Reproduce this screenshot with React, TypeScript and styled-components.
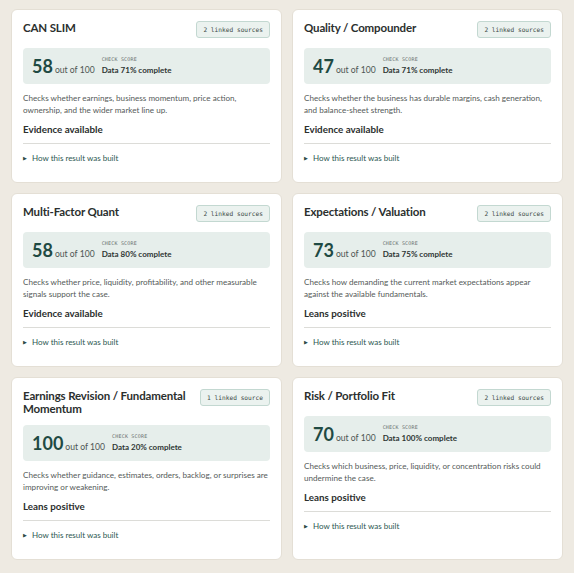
import React from "react";
import styled, { createGlobalStyle } from "styled-components";

const GlobalStyle = createGlobalStyle`
  html, body {
    margin: 0;
    padding: 0;
    background: #eeeae2;
  }
  body {
    font-family: Lato, "Noto Sans", sans-serif;
    color: #2b2f2e;
  }
`;

const Page = styled.div`
  display: grid;
  grid-template-columns: 1fr 1fr;
  gap: 10px;
  padding: 9px 11px 12px 11px;
`;

const Card = styled.div`
  background: #ffffff;
  border: 1px solid #e4dfd5;
  border-radius: 6px;
  padding: 11px 11px 19px 11px;
  display: flex;
  flex-direction: column;
  box-sizing: border-box;
`;

const Head = styled.div`
  display: flex;
  justify-content: space-between;
  align-items: flex-start;
  gap: 8px;
`;

const Title = styled.h3`
  margin: 0;
  font-size: 11.5px;
  line-height: 13px;
  font-weight: 700;
  letter-spacing: -0.15px;
  color: #2b2f2e;
`;

const Badge = styled.span`
  flex-shrink: 0;
  font-family: "DejaVu Sans Mono", "Liberation Mono", monospace;
  font-size: 6.2px;
  line-height: 15px;
  padding: 0 6px;
  border: 1px solid #c3d8d1;
  background: #ebf2ef;
  border-radius: 3px;
  color: #3d4a47;
  white-space: nowrap;
`;

const ScoreBox = styled.div`
  margin-top: 10px;
  background: #e6eeeb;
  border-radius: 4px;
  height: 36px;
  display: flex;
  align-items: center;
  padding: 0 9px;
  gap: 7px;
`;

const Score = styled.div`
  display: flex;
  align-items: baseline;
  gap: 2px;
`;

const Big = styled.span`
  font-size: 18px;
  font-weight: 700;
  color: #1f4a43;
`;

const OutOf = styled.span`
  font-size: 8.6px;
  color: #4d5553;
`;

const Meta = styled.div`
  display: flex;
  flex-direction: column;
  gap: 3px;
  margin-top: -2px;
`;

const Label = styled.span`
  font-family: "DejaVu Sans Mono", "Liberation Mono", monospace;
  font-size: 5px;
  letter-spacing: 0.2px;
  color: #6a716f;
`;

const Complete = styled.span`
  font-size: 8px;
  font-weight: 700;
  color: #2e3634;
`;

const Desc = styled.p`
  margin: 8px 0 0 0;
  font-size: 8.1px;
  line-height: 12px;
  color: #555b59;
`;

const Verdict = styled.div`
  margin-top: 7px;
  font-size: 9.8px;
  font-weight: 700;
  color: #2b2f2e;
  padding-bottom: 8px;
  border-bottom: 1px solid #dcdcd8;
`;

const Details = styled.div`
  margin-top: 9px;
  font-size: 8px;
  color: #2d5751;
  display: flex;
  align-items: center;
  gap: 5px;
`;

const Arrow = styled.span`
  font-size: 5px;
  color: #2d4a45;
`;

type Check = {
  title: string;
  sources: string;
  score: number;
  data: number;
  desc: string;
  verdict: string;
};

const checks: Check[] = [
  {
    title: "CAN SLIM",
    sources: "2 linked sources",
    score: 58,
    data: 71,
    desc: "Checks whether earnings, business momentum, price action, ownership, and the wider market line up.",
    verdict: "Evidence available",
  },
  {
    title: "Quality / Compounder",
    sources: "2 linked sources",
    score: 47,
    data: 71,
    desc: "Checks whether the business has durable margins, cash generation, and balance-sheet strength.",
    verdict: "Evidence available",
  },
  {
    title: "Multi-Factor Quant",
    sources: "2 linked sources",
    score: 58,
    data: 80,
    desc: "Checks whether price, liquidity, profitability, and other measurable signals support the case.",
    verdict: "Evidence available",
  },
  {
    title: "Expectations / Valuation",
    sources: "2 linked sources",
    score: 73,
    data: 75,
    desc: "Checks how demanding the current market expectations appear against the available fundamentals.",
    verdict: "Leans positive",
  },
  {
    title: "Earnings Revision / Fundamental Momentum",
    sources: "1 linked source",
    score: 100,
    data: 20,
    desc: "Checks whether guidance, estimates, orders, backlog, or surprises are improving or weakening.",
    verdict: "Leans positive",
  },
  {
    title: "Risk / Portfolio Fit",
    sources: "2 linked sources",
    score: 70,
    data: 100,
    desc: "Checks which business, price, liquidity, or concentration risks could undermine the case.",
    verdict: "Leans positive",
  },
];

const CheckCard = ({ c }: { c: Check }) => (
  <Card>
    <Head>
      <Title>{c.title}</Title>
      <Badge>{c.sources}</Badge>
    </Head>
    <ScoreBox>
      <Score>
        <Big>{c.score}</Big>
        <OutOf>out of 100</OutOf>
      </Score>
      <Meta>
        <Label>CHECK SCORE</Label>
        <Complete>Data {c.data}% complete</Complete>
      </Meta>
    </ScoreBox>
    <Desc>{c.desc}</Desc>
    <Verdict>{c.verdict}</Verdict>
    <Details>
      <Arrow>▶</Arrow>
      How this result was built
    </Details>
  </Card>
);

export default function App() {
  return (
    <>
      <GlobalStyle />
      <Page>
        {checks.map((c) => (
          <CheckCard key={c.title} c={c} />
        ))}
      </Page>
    </>
  );
}
